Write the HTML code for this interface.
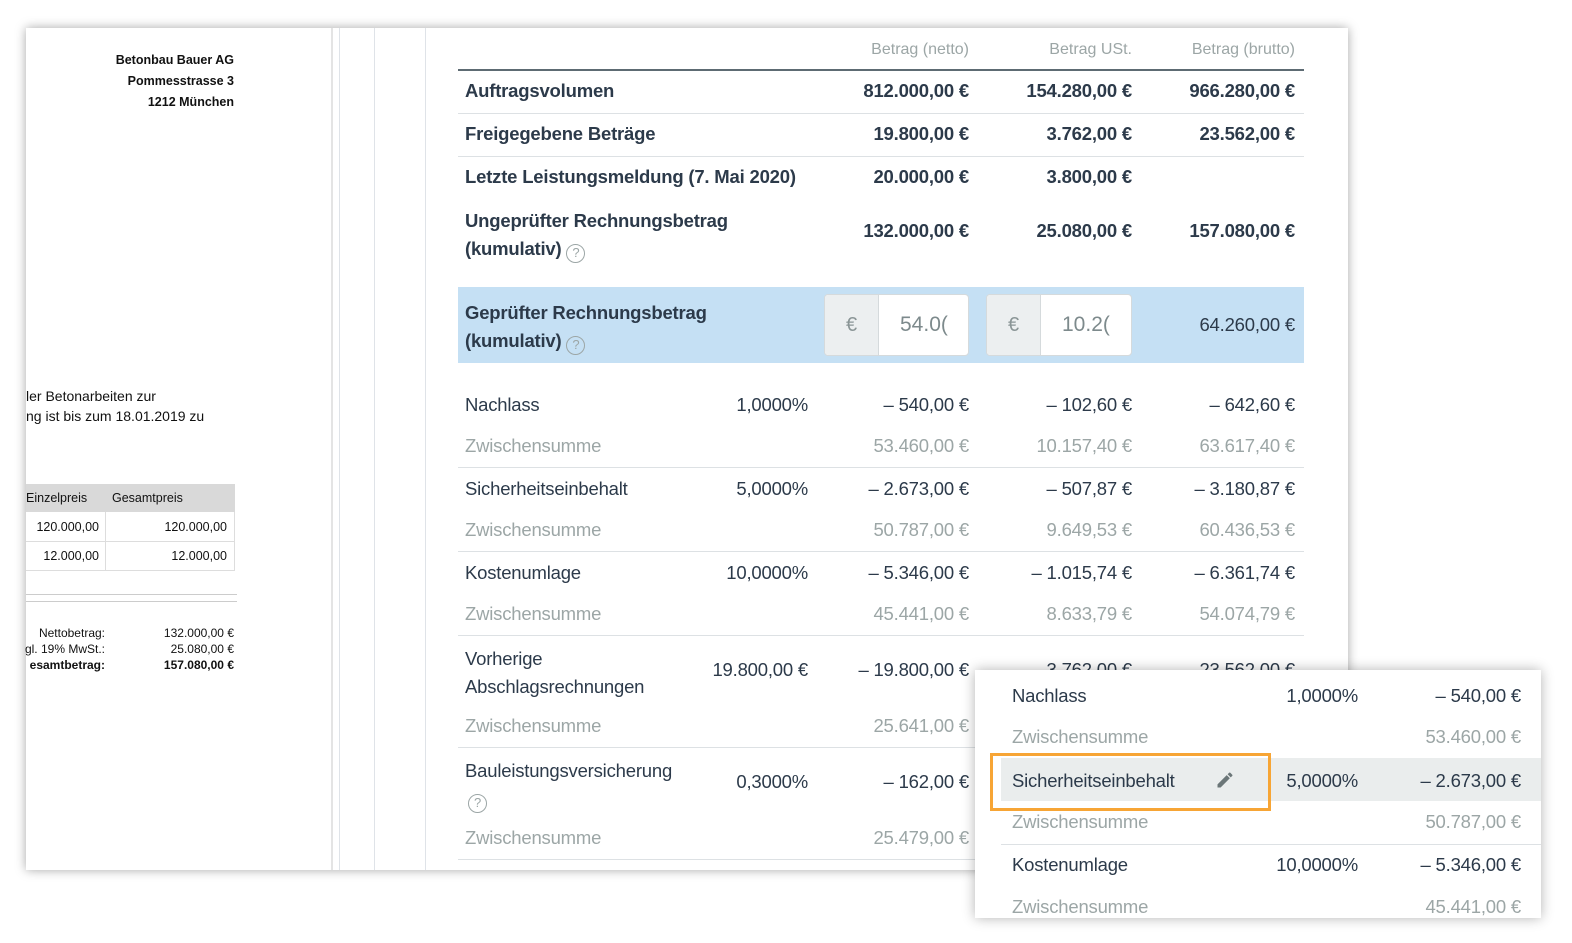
<!DOCTYPE html>
<html><head><meta charset="utf-8"><style>
*{margin:0;padding:0;box-sizing:border-box}
body{width:1572px;height:943px;background:#fff;position:relative;overflow:hidden;font-family:"Liberation Sans",sans-serif;color:#2c3a4a}
.a{position:absolute;white-space:nowrap}
.r{text-align:right}
.panel{position:absolute;left:26px;top:28px;width:1322px;height:842px;background:#fff;box-shadow:0 0 10px rgba(0,0,0,.35)}
.v{position:absolute;top:28px;height:842px;width:1px;background:#dfe3e8}
.t{font-size:18.5px;letter-spacing:-0.2px}
.b{font-weight:bold}
.g{color:#9ca6a6}
.hl{position:absolute;left:458px;width:846px;height:1px;background:#dde1e4}
.doc{font-size:12.5px;color:#111}
</style></head><body>
<div class="panel"></div>
<div class="v" style="left:331px;background:#e4e4e4;width:2px"></div>
<div class="v" style="left:339px"></div>
<div class="v" style="left:374px"></div>
<div class="v" style="left:425px"></div>

<!-- left document -->
<div class="a doc b r" style="right:1338px;top:50px;line-height:21px;font-size:12.5px">Betonbau Bauer AG<br>Pommesstrasse 3<br>1212 München</div>
<div class="a doc" style="left:26px;top:386px;font-size:14px;line-height:20px">ler Betonarbeiten zur<br>ng ist bis zum 18.01.2019 zu</div>
<div class="a" style="left:26px;top:484px;width:209px;height:87px;border:1px solid #ddd;border-left:0"></div>
<div class="a" style="left:26px;top:484px;width:209px;height:28px;background:#d9d9d9"></div>
<div class="a doc" style="left:26px;top:491px;font-size:12.5px">Einzelpreis</div>
<div class="a doc" style="left:112px;top:491px;font-size:12.5px">Gesamtpreis</div>
<div class="a" style="left:105px;top:512px;width:1px;height:58px;background:#ddd"></div>
<div class="a" style="left:26px;top:541px;width:208px;height:1px;background:#ddd"></div>
<div class="a doc r" style="right:1473px;top:520px">120.000,00</div>
<div class="a doc r" style="right:1345px;top:520px">120.000,00</div>
<div class="a doc r" style="right:1473px;top:549px">12.000,00</div>
<div class="a doc r" style="right:1345px;top:549px">12.000,00</div>
<div class="a" style="left:26px;top:594px;width:211px;height:1px;background:#ccc"></div>
<div class="a" style="left:26px;top:601px;width:211px;height:1px;background:#ccc"></div>
<div class="a doc r" style="right:1467px;top:625px;font-size:12px;line-height:16px">Nettobetrag:<br>gl. 19% MwSt.:<br><b>esamtbetrag:</b></div>
<div class="a doc r" style="right:1338px;top:625px;font-size:12px;line-height:16px">132.000,00 €<br>25.080,00 €<br><b>157.080,00 €</b></div>

<!-- main table -->
<div class="a r g" style="right:603px;top:41px;font-size:16px">Betrag (netto)</div>
<div class="a r g" style="right:440px;top:41px;font-size:16px">Betrag USt.</div>
<div class="a r g" style="right:277px;top:41px;font-size:16px">Betrag (brutto)</div>
<div class="hl" style="top:69px;height:2px;background:#5d6b73"></div>

<div class="a t b" style="left:465px;top:80px">Auftragsvolumen</div>
<div class="a t b r" style="right:603px;top:80px">812.000,00 €</div>
<div class="a t b r" style="right:440px;top:80px">154.280,00 €</div>
<div class="a t b r" style="right:277px;top:80px">966.280,00 €</div>
<div class="hl" style="top:113px"></div>
<div class="a t b" style="left:465px;top:123px">Freigegebene Beträge</div>
<div class="a t b r" style="right:603px;top:123px">19.800,00 €</div>
<div class="a t b r" style="right:440px;top:123px">3.762,00 €</div>
<div class="a t b r" style="right:277px;top:123px">23.562,00 €</div>
<div class="hl" style="top:156px"></div>
<div class="a t b" style="left:465px;top:166px">Letzte Leistungsmeldung (7. Mai 2020)</div>
<div class="a t b r" style="right:603px;top:166px">20.000,00 €</div>
<div class="a t b r" style="right:440px;top:166px">3.800,00 €</div>
<div class="a t b" style="left:465px;top:207px;line-height:28px">Ungeprüfter Rechnungsbetrag<br>(kumulativ) <span style="display:inline-block;width:19px;height:19px;border:1.5px solid #9ca6a6;border-radius:50%;font-size:13px;color:#9ca6a6;text-align:center;line-height:16px;font-weight:normal;vertical-align:-2px">?</span></div>
<div class="a t b r" style="right:603px;top:220px">132.000,00 €</div>
<div class="a t b r" style="right:440px;top:220px">25.080,00 €</div>
<div class="a t b r" style="right:277px;top:220px">157.080,00 €</div>

<div class="a" style="left:458px;top:287px;width:846px;height:76px;background:#c5e0f4"></div>
<div class="a t b" style="left:465px;top:299px;line-height:28px">Geprüfter Rechnungsbetrag<br>(kumulativ) <span style="display:inline-block;width:19px;height:19px;border:1.5px solid #9ca6a6;border-radius:50%;font-size:13px;color:#9ca6a6;text-align:center;line-height:16px;font-weight:normal;vertical-align:-2px">?</span></div>
<div class="a" style="left:824px;top:294px;width:145px;height:62px;border:1px solid #d5dadc;border-radius:4px;background:#fff;overflow:hidden">
<div style="position:absolute;left:0;top:0;width:54px;height:62px;background:#eceff0;border-right:1px solid #d5dadc;font-size:20px;color:#8a9596;text-align:center;line-height:60px">€</div>
<div style="position:absolute;left:75px;top:0;font-size:21px;color:#7d8a8c;line-height:60px">54.0(</div></div>
<div class="a" style="left:986px;top:294px;width:146px;height:62px;border:1px solid #d5dadc;border-radius:4px;background:#fff;overflow:hidden">
<div style="position:absolute;left:0;top:0;width:54px;height:62px;background:#eceff0;border-right:1px solid #d5dadc;font-size:20px;color:#8a9596;text-align:center;line-height:60px">€</div>
<div style="position:absolute;left:75px;top:0;font-size:21px;color:#7d8a8c;line-height:60px">10.2(</div></div>
<div class="a t r" style="right:277px;top:314px">64.260,00 €</div>

<div class="a t" style="left:465px;top:394px">Nachlass</div>
<div class="a t r" style="right:764px;top:394px">1,0000%</div>
<div class="a t r" style="right:603px;top:394px">– 540,00 €</div>
<div class="a t r" style="right:440px;top:394px">– 102,60 €</div>
<div class="a t r" style="right:277px;top:394px">– 642,60 €</div>
<div class="a t g" style="left:465px;top:435px">Zwischensumme</div>
<div class="a t g r" style="right:603px;top:435px">53.460,00 €</div>
<div class="a t g r" style="right:440px;top:435px">10.157,40 €</div>
<div class="a t g r" style="right:277px;top:435px">63.617,40 €</div>
<div class="hl" style="top:467px"></div>

<div class="a t" style="left:465px;top:478px">Sicherheitseinbehalt</div>
<div class="a t r" style="right:764px;top:478px">5,0000%</div>
<div class="a t r" style="right:603px;top:478px">– 2.673,00 €</div>
<div class="a t r" style="right:440px;top:478px">– 507,87 €</div>
<div class="a t r" style="right:277px;top:478px">– 3.180,87 €</div>
<div class="a t g" style="left:465px;top:519px">Zwischensumme</div>
<div class="a t g r" style="right:603px;top:519px">50.787,00 €</div>
<div class="a t g r" style="right:440px;top:519px">9.649,53 €</div>
<div class="a t g r" style="right:277px;top:519px">60.436,53 €</div>
<div class="hl" style="top:551px"></div>

<div class="a t" style="left:465px;top:562px">Kostenumlage</div>
<div class="a t r" style="right:764px;top:562px">10,0000%</div>
<div class="a t r" style="right:603px;top:562px">– 5.346,00 €</div>
<div class="a t r" style="right:440px;top:562px">– 1.015,74 €</div>
<div class="a t r" style="right:277px;top:562px">– 6.361,74 €</div>
<div class="a t g" style="left:465px;top:603px">Zwischensumme</div>
<div class="a t g r" style="right:603px;top:603px">45.441,00 €</div>
<div class="a t g r" style="right:440px;top:603px">8.633,79 €</div>
<div class="a t g r" style="right:277px;top:603px">54.074,79 €</div>
<div class="hl" style="top:635px"></div>

<div class="a t" style="left:465px;top:645px;line-height:28px">Vorherige<br>Abschlagsrechnungen</div>
<div class="a t r" style="right:764px;top:659px">19.800,00 €</div>
<div class="a t r" style="right:603px;top:659px">– 19.800,00 €</div>
<div class="a t r" style="right:440px;top:659px">3.762,00 €</div>
<div class="a t r" style="right:277px;top:659px">23.562,00 €</div>
<div class="a t g" style="left:465px;top:715px">Zwischensumme</div>
<div class="a t g r" style="right:603px;top:715px">25.641,00 €</div>
<div class="hl" style="top:747px"></div>
<div class="a t" style="left:465px;top:757px;line-height:28px">Bauleistungsversicherung<br><span style="display:inline-block;width:19px;height:19px;border:1.5px solid #9ca6a6;border-radius:50%;font-size:13px;color:#9ca6a6;text-align:center;line-height:16px;vertical-align:-2px;margin-left:3px">?</span></div>
<div class="a t r" style="right:764px;top:771px">0,3000%</div>
<div class="a t r" style="right:603px;top:771px">– 162,00 €</div>
<div class="a t g" style="left:465px;top:827px">Zwischensumme</div>
<div class="a t g r" style="right:603px;top:827px">25.479,00 €</div>
<div class="hl" style="top:859px"></div>

<!-- popup -->
<div class="a" style="left:975px;top:670px;width:566px;height:248px;background:#fff;box-shadow:0 0 12px rgba(0,0,0,.3);overflow:hidden">
<div class="a" style="left:26px;top:88px;width:540px;height:43px;background:#eaeded"></div>
<div class="a" style="left:26px;top:174px;width:540px;height:1px;background:#dde1e4"></div>
<div class="a t" style="left:37px;top:15px">Nachlass</div>
<div class="a t r" style="right:183px;top:15px">1,0000%</div>
<div class="a t r" style="right:20px;top:15px">– 540,00 €</div>
<div class="a t g" style="left:37px;top:56px">Zwischensumme</div>
<div class="a t g r" style="right:20px;top:56px">53.460,00 €</div>
<div class="a t" style="left:37px;top:100px">Sicherheitseinbehalt</div>
<svg class="a" style="left:240px;top:100px" width="20" height="20" viewBox="0 0 24 24"><path fill="#6b7678" d="M3 17.25V21h3.75L17.81 9.94l-3.75-3.75L3 17.25zM20.71 7.04a1 1 0 0 0 0-1.41l-2.34-2.34a1 1 0 0 0-1.41 0l-1.83 1.83 3.75 3.75 1.83-1.83z"/></svg>
<div class="a t r" style="right:183px;top:100px">5,0000%</div>
<div class="a t r" style="right:20px;top:100px">– 2.673,00 €</div>
<div class="a t g" style="left:37px;top:141px">Zwischensumme</div>
<div class="a t g r" style="right:20px;top:141px">50.787,00 €</div>
<div class="a t" style="left:37px;top:184px">Kostenumlage</div>
<div class="a t r" style="right:183px;top:184px">10,0000%</div>
<div class="a t r" style="right:20px;top:184px">– 5.346,00 €</div>
<div class="a t g" style="left:37px;top:226px">Zwischensumme</div>
<div class="a t g r" style="right:20px;top:226px">45.441,00 €</div>
</div>
<div class="a" style="left:990px;top:753px;width:281px;height:58px;border:3px solid #f7a535"></div>
</body></html>
